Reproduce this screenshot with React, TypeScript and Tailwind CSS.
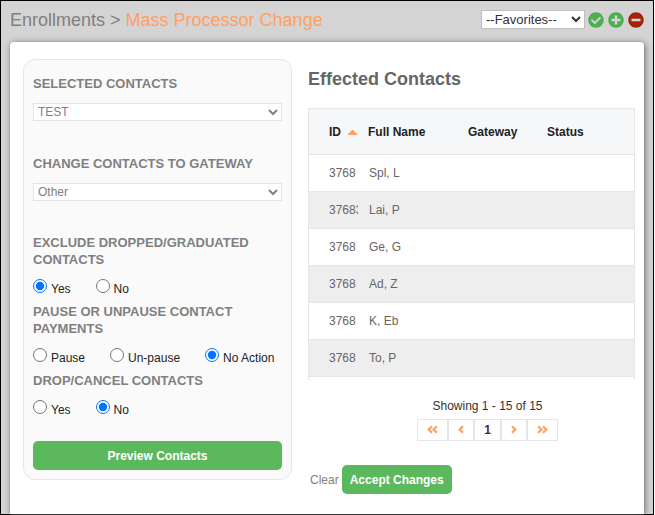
import React from 'react';
import { FaCheckCircle, FaPlusCircle, FaMinusCircle, FaCaretUp } from 'react-icons/fa';

interface Contact {
  id: string;
  name: string;
}

interface RadioRowProps {
  name: string;
  legend: string;
  options: string[];
  selected: string;
}

const contacts: Contact[] = [
  { id: '3768', name: 'Spl, L' },
  { id: '37683', name: 'Lai, P' },
  { id: '3768', name: 'Ge, G' },
  { id: '3768', name: 'Ad, Z' },
  { id: '3768', name: 'K, Eb' },
  { id: '3768', name: 'To, P' },
];

const headingClass = 'block text-[13px] leading-[17px] font-black uppercase text-[#808080]';
const selectClass = 'block w-full h-[18px] pr-[2px] mt-[11px] rounded-none border border-[#e5e5e5] bg-white text-[12px] leading-4 text-[#808080]';

const RadioRow: React.FC<RadioRowProps> = ({ name, legend, options, selected }) => (
  <fieldset>
    <legend className={headingClass}>{legend}</legend>
    <div className="flex h-[35px] items-end gap-[25px] pb-[6px]">
      {options.map(option => (
        <label key={option} className="flex items-end gap-[5px] text-[12px] leading-4 text-[#222] whitespace-nowrap">
          <input type="radio" name={name} defaultChecked={option === selected} className="size-[14px] mb-1 -mr-px" />
          {option}
        </label>
      ))}
    </div>
  </fieldset>
);

// Chevrons for the pager: one or two strokes, pointing left or right
const PagerIcon: React.FC<{ double?: boolean; right?: boolean }> = ({ double, right }) => (
  <svg
    width={double ? 11 : 6}
    height="9"
    viewBox={double ? '0 0 11 9' : '0 0 6 9'}
    fill="none"
    stroke="#ff9f61"
    strokeWidth="2.2"
    className={right ? 'mb-px rotate-180' : 'mb-px'}
  >
    <path d="M5 1.2 L1.7 4.5 L5 7.8" />
    {double && <path d="M9.8 1.2 L6.5 4.5 L9.8 7.8" />}
  </svg>
);

const App: React.FC = () => {
  return (
    <div className="mr-px flex min-h-screen flex-col border border-black bg-[#d4d4d4] font-['Liberation_Sans',Arial,sans-serif]">
      <header className="flex h-[41px] items-start justify-between px-[9px]">
        <h1 className="pt-[5px] text-[18px] leading-7 text-[#808080]">
          Enrollments &gt; <span className="text-[#ff9f61]">Mass Processor Change</span>
        </h1>
        <div className="flex items-center pt-[9px]">
          <select
            aria-label="Favorites"
            className="mr-[3px] h-[19px] w-[104px] rounded-none border border-[#bfbfbf] bg-white pr-[2px] text-[13px] leading-4 text-[#333]"
          >
            <option>--Favorites--</option>
          </select>
          <div className="flex gap-[4px]">
            <button type="button" aria-label="Go to favorite">
              <FaCheckCircle className="size-4 text-[#4caf50]" />
            </button>
            <button type="button" aria-label="Add favorite">
              <FaPlusCircle className="size-4 text-[#4caf50]" />
            </button>
            <button type="button" aria-label="Remove favorite">
              <FaMinusCircle className="size-4 text-[#a5230d]" />
            </button>
          </div>
        </div>
      </header>

      <main className="mx-[9px] grid flex-1 grid-cols-[269fr_327fr] items-start gap-4 rounded-t-[4px] bg-white pt-[17px] pr-[9px] pl-[13px] shadow-[1px_1px_6px_#666]">
        <form className="rounded-[12px] border border-[#e6e6e6] bg-[#fafafa] px-[9px] pt-[15px] pb-[9px]">
          <label htmlFor="selected" className={headingClass}>Selected Contacts</label>
          <select id="selected" className={selectClass}>
            <option>TEST</option>
          </select>

          <label htmlFor="gateway" className={`${headingClass} mt-[34px]`}>Change Contacts to Gateway</label>
          <select id="gateway" className={`${selectClass} mb-[33px]`}>
            <option>Other</option>
          </select>

          <RadioRow name="exclude" legend="Exclude Dropped/Graduated Contacts" options={['Yes', 'No']} selected="Yes" />
          <RadioRow name="pause" legend="Pause or Unpause Contact Payments" options={['Pause', 'Un-pause', 'No Action']} selected="No Action" />
          <RadioRow name="drop" legend="Drop/Cancel Contacts" options={['Yes', 'No']} selected="No" />

          <button type="button" className="mt-[17px] h-[29px] w-full rounded-[5px] bg-[#5cb85c] text-[12px] font-bold text-white">
            Preview Contacts
          </button>
        </form>

        <section>
          <h2 className="mb-[15px] pt-[6px] text-[18px] leading-7 font-bold text-[#666]">Effected Contacts</h2>
          <div className="border-x border-t border-[#e6e6e6] pb-[3px]">
            <table className="w-full table-fixed border-separate border-spacing-0 text-left text-[12px] leading-4">
              <thead>
                <tr className="h-[46px] bg-[#f5f7f9] text-[#222]">
                  <th className="w-[59px] border-b border-[#e6e6e6] pl-5">
                    <span className="flex items-center gap-[6px]">
                      ID <FaCaretUp className="h-4 w-[11px] text-[#ff9f61]" />
                    </span>
                  </th>
                  <th className="w-[100px] border-b border-[#e6e6e6]">Full Name</th>
                  <th className="w-[79px] border-b border-[#e6e6e6]">Gateway</th>
                  <th className="border-b border-[#e6e6e6]">Status</th>
                </tr>
              </thead>
              <tbody>
                {contacts.map((contact, idx) => (
                  <tr key={idx} className="h-[37px] text-[#666] even:bg-[#eee]">
                    <td className="border-b border-[#e6e6e6] pl-5">
                      <span className="block w-[29px] overflow-hidden">{contact.id}</span>
                    </td>
                    <td className="border-b border-[#e6e6e6] pl-px">{contact.name}</td>
                    <td className="border-b border-[#e6e6e6]" />
                    <td className="border-b border-[#e6e6e6]" />
                  </tr>
                ))}
              </tbody>
            </table>
          </div>

          <div className="flex flex-col items-center gap-[5px] pt-[18px] pl-8 text-[12px] leading-4 text-[#333]">
            <p>Showing 1 - 15 of 15</p>
            <nav aria-label="Pages" className="flex h-[22px]">
              <button type="button" aria-label="First" className="flex w-[31px] items-center justify-center border border-[#e6e6e6]">
                <PagerIcon double />
              </button>
              <button type="button" aria-label="Previous" className="flex w-[26px] items-center justify-center border border-[#e6e6e6]">
                <PagerIcon />
              </button>
              <button type="button" className="w-[27px] border border-[#e6e6e6] font-bold">1</button>
              <button type="button" aria-label="Next" className="flex w-[26px] items-center justify-center border border-[#e6e6e6]">
                <PagerIcon right />
              </button>
              <button type="button" aria-label="Last" className="flex w-[31px] items-center justify-center border border-[#e6e6e6]">
                <PagerIcon double right />
              </button>
            </nav>
          </div>

          <div className="mt-6 flex items-center gap-[3px] pl-[2px] text-[12px]">
            <a href="#" className="text-[#808080]">Clear</a>
            <button type="button" className="h-[29px] rounded-[5px] bg-[#5cb85c] px-2 font-bold text-white">
              Accept Changes
            </button>
          </div>
        </section>
      </main>
    </div>
  );
};

export default App;
